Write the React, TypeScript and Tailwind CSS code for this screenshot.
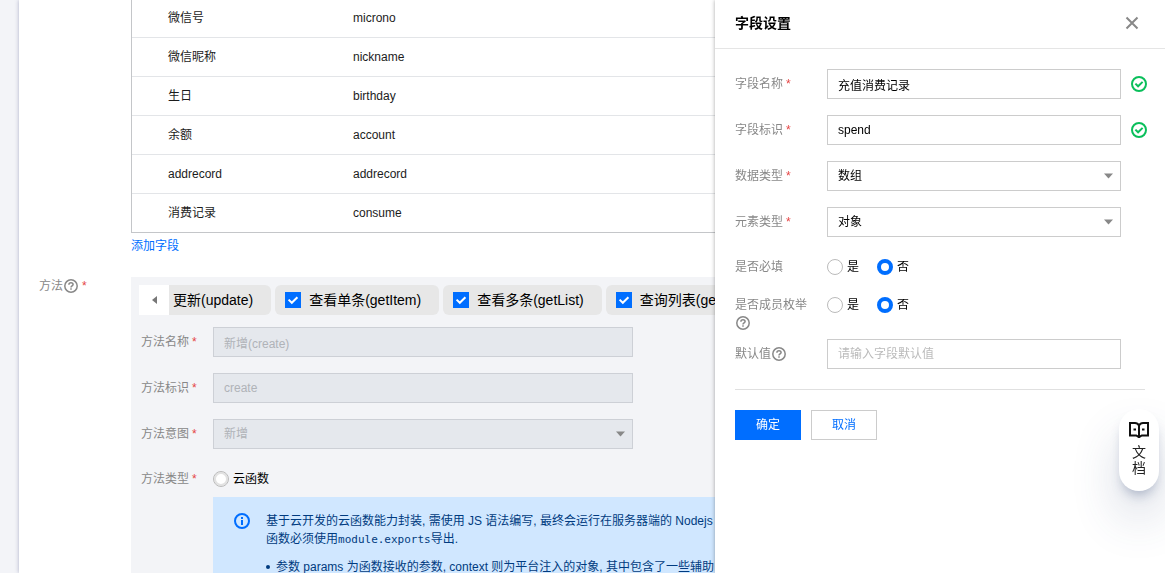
import type { ReactNode } from 'react';

const fields = [
  ['微信号', 'microno'],
  ['微信昵称', 'nickname'],
  ['生日', 'birthday'],
  ['余额', 'account'],
  ['addrecord', 'addrecord'],
  ['消费记录', 'consume'],
];

const methods = ['更新(update)', '查看单条(getItem)', '查看多条(getList)', '查询列表(getPage)'];

function Help() {
  return (
    <svg className="inline-block size-4 shrink-0 align-middle" viewBox="0 0 16 16" fill="none" stroke="#888" strokeWidth="1.5" aria-hidden="true">
      <circle cx="8" cy="8" r="6.2" />
      <path d="M5.9 6.8C5.9 5.4 6.8 4.7 8 4.7s2.1.8 2.1 1.8c0 1.4-2.1 1.5-2.1 3" />
      <path d="M8 10.3v1.4" />
    </svg>
  );
}

function Star() {
  return <span className="ml-[3px] text-[#e54545]">*</span>;
}

function Caret() {
  return (
    <svg className="pointer-events-none absolute top-3 right-2 h-[6px] w-[9px]" viewBox="0 0 9 6" aria-hidden="true">
      <path d="M0 0.5h9L4.5 5.5z" fill="#888" />
    </svg>
  );
}

function Valid() {
  return (
    <svg className="ml-[10px] size-4 shrink-0" viewBox="0 0 16 16" fill="none" stroke="#0abf5b" strokeWidth="2" aria-label="校验通过">
      <circle cx="8" cy="8" r="7" />
      <path d="M4.4 7.6l2.7 2.7 4.5-4.4" />
    </svg>
  );
}

function Radio({ name, label, checked }: { name: string; label: string; checked?: boolean }) {
  return (
    <label className="flex items-center gap-1 leading-[18px]">
      <input
        type="radio"
        name={name}
        defaultChecked={checked}
        className="size-4 appearance-none rounded-full border border-[#bbb] bg-white checked:border-4 checked:border-[#006eff]"
      />
      {label}
    </label>
  );
}

function MethodRow({ id, label, children }: { id: string; label: string; children: ReactNode }) {
  return (
    <div className="mb-4 flex items-center">
      <label htmlFor={id} className="w-[72px] shrink-0 text-[#888]">
        {label}
        <Star />
      </label>
      <div className="relative w-[420px]">{children}</div>
    </div>
  );
}

function DrawerRow({ id, label, valid, children }: { id: string; label: string; valid?: boolean; children: ReactNode }) {
  return (
    <div className="mb-4 flex items-center">
      <label htmlFor={id} className="w-[92px] shrink-0 text-[#888]">
        {label}
        <Star />
      </label>
      <div className="relative w-[294px] shrink-0">{children}</div>
      {valid && <Valid />}
    </div>
  );
}

const control = 'block h-[30px] w-full appearance-none rounded-none border border-[#ccc] bg-white px-[10px]';
const disabledControl = 'block h-[30px] w-full appearance-none rounded-none border border-[#cdd0d6] bg-[#e5e8ed] px-[10px] text-[#b0b3b8] opacity-100';

function Main() {
  return (
    <main className="ml-[19px] h-full overflow-hidden bg-white pl-5 shadow-[0_0_4px_rgba(40,50,110,0.35)]">
      <div className="-mt-px pl-[92px]">
        <table className="w-full table-fixed border-separate border-spacing-0 border-b border-l border-[#c4c6c9] text-[#1c1c1c]">
          <tbody>
            {fields.map(([name, key], i) => (
              <tr key={key} className={i < fields.length - 1 ? 'h-[39px]' : 'h-[38px]'}>
                <td className={`w-[185px] pl-9 ${i < fields.length - 1 ? 'border-b border-[#e3e5e8]' : ''}`}>{name}</td>
                <td className={`pl-9 ${i < fields.length - 1 ? 'border-b border-[#e3e5e8]' : ''}`}>{key}</td>
              </tr>
            ))}
          </tbody>
        </table>
        <a href="#add" className="mt-1 block text-[#006eff]">
          添加字段
        </a>
      </div>

      <section className="mt-[22px] flex">
        <div className="flex h-[18px] w-[92px] shrink-0 items-center text-[#888]">
          方法
          <Help />
          <Star />
        </div>
        <div className="min-w-0 flex-1 bg-[#f3f4f7]">
          <div className="relative mx-2 mt-2 flex gap-1 overflow-hidden text-sm">
            {methods.map((m) => (
              <label key={m} className="flex h-[30px] shrink-0 items-center gap-2 rounded-md bg-[#e7e7e7] pr-[18px] pl-[10px] whitespace-nowrap">
                <span className="grid size-4">
                  <input type="checkbox" defaultChecked className="col-start-1 row-start-1 size-4 appearance-none border border-[#bbb] bg-white checked:border-[#006eff] checked:bg-[#006eff]" />
                  <svg className="pointer-events-none col-start-1 row-start-1 size-4" viewBox="0 0 16 16" fill="none" stroke="#fff" strokeWidth="2" aria-hidden="true">
                    <path d="M3.6 7.6l3.2 3.2 5.6-5.6" />
                  </svg>
                </span>
                {m}
              </label>
            ))}
            <button type="button" aria-label="向左滚动" className="absolute top-0 left-0 flex h-[30px] w-[30px] items-center justify-center bg-white">
              <svg className="h-2 w-[5px]" viewBox="0 0 5 8" aria-hidden="true">
                <path d="M5 0v8L0 4z" fill="#777" />
              </svg>
            </button>
          </div>

          <div className="mt-3 pl-[10px]">
            <MethodRow id="m-name" label="方法名称">
              <input id="m-name" disabled defaultValue="新增(create)" className={disabledControl} />
            </MethodRow>
            <MethodRow id="m-key" label="方法标识">
              <input id="m-key" disabled defaultValue="create" className={disabledControl} />
            </MethodRow>
            <MethodRow id="m-intent" label="方法意图">
              <select id="m-intent" disabled className={disabledControl}>
                <option>新增</option>
              </select>
              <Caret />
            </MethodRow>
            <div className="flex pt-[5px]">
              <div className="w-[72px] shrink-0 text-[#888]">
                方法类型
                <Star />
              </div>
              <div className="min-w-0 flex-1">
                <label className="flex h-[18px] items-center gap-1">
                  <input type="radio" name="m-type" className="size-4 appearance-none rounded-full border border-[#bbb] bg-white shadow-[inset_0_0_0_2px_#e2e2e2]" />
                  云函数
                </label>
                <div className="mt-[9px] flex h-40 bg-[#d0e7ff] px-5 pt-[15px] text-[#003b80]">
                  <svg className="mt-px mr-4 ml-px size-4 shrink-0" viewBox="0 0 16 16" fill="none" stroke="#006eff" strokeWidth="2" aria-hidden="true">
                    <circle cx="8" cy="8" r="7" />
                    <path d="M8 7v5M8 4v2" />
                  </svg>
                  <div className="whitespace-nowrap">
                    <p>
                      基于云开发的云函数能力封装, 需使用 JS 语法编写, 最终会运行在服务器端的 Nodejs
                      <br />
                      函数必须使用<code className="font-['DejaVu_Sans_Mono',monospace] text-[11px]">module.exports</code>导出.
                    </p>
                    <ul className="mt-[9px]">
                      <li className="flex items-center gap-[6px]">
                        <span className="size-1 rounded-full bg-[#003b80]" />
                        参数 params 为函数接收的参数, context 则为平台注入的对象, 其中包含了一些辅助
                      </li>
                    </ul>
                  </div>
                </div>
              </div>
            </div>
          </div>
        </div>
      </section>
    </main>
  );
}

function Drawer() {
  return (
    <aside className="fixed inset-y-0 right-0 w-[450px] bg-white shadow-[0_0_4px_rgba(0,0,0,0.35)]">
      <header className="flex h-[49px] items-center justify-between border-b border-[#e5e5e5] pr-[26px] pb-[2px] pl-5">
        <h2 className="text-sm font-bold">字段设置</h2>
        <button type="button" aria-label="关闭" className="size-[14px]">
          <svg className="size-[14px]" viewBox="0 0 14 14" fill="none" stroke="#888" strokeWidth="2" aria-hidden="true">
            <path d="M1.5 1.5l11 11M12.5 1.5l-11 11" />
          </svg>
        </button>
      </header>
      <form className="px-5 pt-5">
        <DrawerRow id="f-name" label="字段名称" valid>
          <input id="f-name" defaultValue="充值消费记录" className={control} />
        </DrawerRow>
        <DrawerRow id="f-key" label="字段标识" valid>
          <input id="f-key" defaultValue="spend" className={control} />
        </DrawerRow>
        <DrawerRow id="f-type" label="数据类型">
          <select id="f-type" className={control}>
            <option>数组</option>
          </select>
          <Caret />
        </DrawerRow>
        <DrawerRow id="f-elem" label="元素类型">
          <select id="f-elem" className={control}>
            <option>对象</option>
          </select>
          <Caret />
        </DrawerRow>
        <div role="radiogroup" aria-label="是否必填" className="mt-[21px] mb-5 flex">
          <div className="w-[92px] text-[#888]">是否必填</div>
          <div className="flex gap-[18px]">
            <Radio name="required" label="是" />
            <Radio name="required" label="否" checked />
          </div>
        </div>
        <div role="radiogroup" aria-label="是否成员枚举" className="mb-[7px] flex items-start">
          <div className="w-[92px] text-[#888]">
            是否成员枚举
            <div className="flex h-[18px] items-center">
              <Help />
            </div>
          </div>
          <div className="flex gap-[18px]">
            <Radio name="enum" label="是" />
            <Radio name="enum" label="否" checked />
          </div>
        </div>
        <div className="flex items-center">
          <label htmlFor="f-default" className="flex w-[92px] items-center text-[#888]">
            默认值
            <Help />
          </label>
          <div className="w-[294px]">
            <input id="f-default" placeholder="请输入字段默认值" className={`${control} placeholder:text-[#bbb]`} />
          </div>
        </div>
        <div className="mt-5 flex gap-[10px] border-t border-[#e0e0e0] pt-5">
          <button type="button" className="h-[30px] w-[66px] bg-[#006eff] text-white">
            确定
          </button>
          <button type="button" className="h-[30px] w-[66px] border border-[#ccc] bg-white text-[#006eff]">
            取消
          </button>
        </div>
      </form>
      <a
        href="#docs"
        className="absolute right-[6px] bottom-[82px] flex w-10 flex-col items-center rounded-[20px] bg-white px-2 pt-3 pb-[15px] text-sm leading-4 text-[#222] shadow-[0_28px_48px_rgba(54,75,120,0.2),0_8px_12px_-4px_rgba(54,75,120,0.35)]"
      >
        <svg className="mb-[6px] h-[17px] w-5" viewBox="0 0 20 17" fill="none" stroke="#111" strokeWidth="2" aria-hidden="true">
          <path d="M10 4.500C9 2.600 7.800 2 6 2H1v12.500h6.200L10 16.200l2.800-1.700H19V2h-5c-1.800 0-3 .6-4 2.500z" />
          <path d="M10 4v12.500M4.500 8.500h2.500M13 8.500h2.500" />
        </svg>
        <span className="w-[14px] text-center">文档</span>
      </a>
    </aside>
  );
}

export default function App() {
  return (
    <div lang="zh-CN" className="h-screen overflow-hidden bg-[#f3f4f8] font-['Liberation_Sans','Noto_Sans_CJK_SC',sans-serif] text-xs leading-[18px] text-black">
      <Main />
      <Drawer />
    </div>
  );
}
